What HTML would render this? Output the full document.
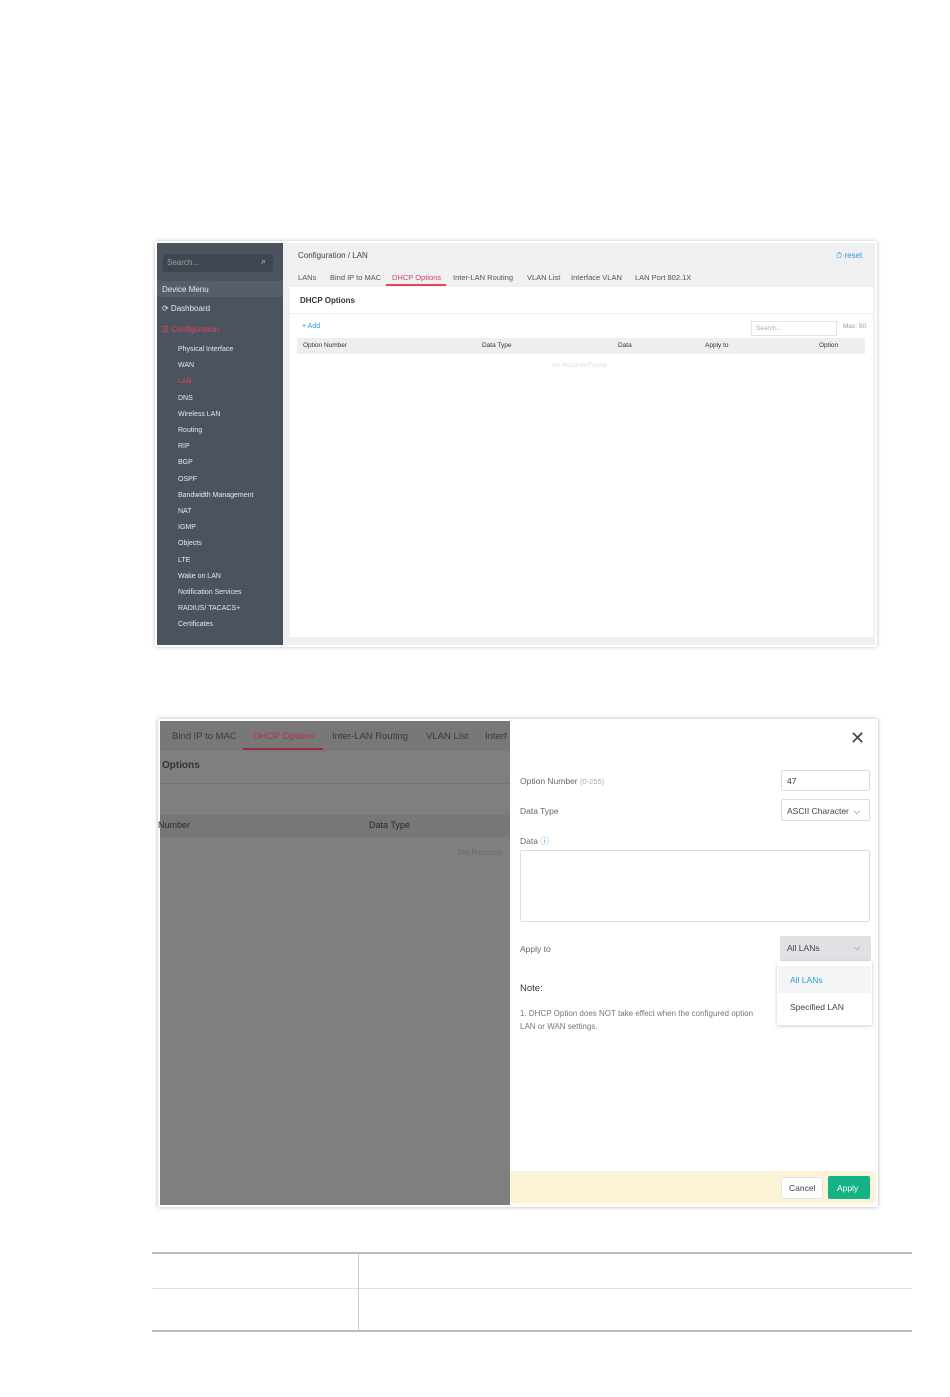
<!DOCTYPE html>
<html><head><meta charset="utf-8"><style>
*{box-sizing:border-box;margin:0;padding:0}
body{width:950px;height:1397px;background:#fff;position:relative;font-family:"Liberation Sans",sans-serif;overflow:hidden}
.a{position:absolute}
.t{position:absolute;white-space:nowrap}
.tb{position:absolute;top:273px;font-size:7.5px;color:#555;white-space:nowrap}
</style></head><body>

<!-- Screenshot 1 -->
<div class="a" style="left:155px;top:241px;width:722px;height:406px;box-shadow:0 0 4px rgba(0,0,0,.25)"></div>
<div class="a" style="left:157px;top:243px;width:126px;height:402px;background:#4b535e"></div>
<div class="a" style="left:163px;top:254px;width:110px;height:18px;background:#3f464f;border-radius:2px"></div>
<div class="t" style="left:167px;top:258px;font-size:8px;color:#9aa0a8">Search...</div>
<div class="t" style="left:261px;top:256px;font-size:9px;color:#cfd3d8">⌕</div>
<div class="a" style="left:157px;top:281px;width:126px;height:16px;background:#555e6a"></div>
<div class="t" style="left:162px;top:285px;font-size:8px;color:#e8eaec">Device Menu</div>
<div class="t" style="left:162px;top:304px;font-size:8px;color:#e8eaec">⟳ Dashboard</div>
<div class="t" style="left:162px;top:325px;font-size:8px;color:#e0455e">☰ Configuration</div>
<div class="a" style="left:178px;top:342px;font-size:7px;color:#e8eaec;line-height:16.2px">
Physical Interface<br>WAN<br><span style="color:#e0455e">LAN</span><br>DNS<br>Wireless LAN<br>Routing<br>RIP<br>BGP<br>OSPF<br>Bandwidth Management<br>NAT<br>IGMP<br>Objects<br>LTE<br>Wake on LAN<br>Notification Services<br>RADIUS/ TACACS+<br>Certificates</div>

<div class="a" style="left:283px;top:243px;width:592px;height:402px;background:#eef0f2"></div>
<div class="t" style="left:298px;top:251px;font-size:8px;color:#444">Configuration / LAN</div>
<div class="t" style="left:836px;top:251px;font-size:8px;color:#2a9fd6">⏱ reset</div>
<div class="tb" style="left:298px">LANs</div>
<div class="tb" style="left:330px">Bind IP to MAC</div>
<div class="tb" style="left:392px;color:#e0455e">DHCP Options</div>
<div class="tb" style="left:453px">Inter-LAN Routing</div>
<div class="tb" style="left:527px">VLAN List</div>
<div class="tb" style="left:571px">Interface VLAN</div>
<div class="tb" style="left:635px">LAN Port 802.1X</div>
<div class="a" style="left:386px;top:284px;width:60px;height:2px;background:#e0455e"></div>
<div class="a" style="left:290px;top:287px;width:583px;height:350px;background:#fff"></div>
<div class="t" style="left:300px;top:296px;font-size:8px;font-weight:bold;color:#333">DHCP Options</div>
<div class="a" style="left:290px;top:313px;width:583px;height:1px;background:#eee"></div>
<div class="t" style="left:302px;top:323px;font-size:7px;color:#2a9fd6">+ Add</div>
<div class="a" style="left:751px;top:321px;width:86px;height:15px;border:1px solid #e3e3e3"></div>
<div class="t" style="left:756px;top:325px;font-size:6.5px;color:#aaa">Search...</div>
<div class="t" style="left:843px;top:323px;font-size:6.5px;color:#999">Max: 50</div>
<div class="a" style="left:297px;top:338px;width:568px;height:16px;background:#eceef0"></div>
<div class="t" style="left:303px;top:342px;font-size:6.5px;color:#333">Option Number</div>
<div class="t" style="left:482px;top:342px;font-size:6.5px;color:#333">Data Type</div>
<div class="t" style="left:618px;top:342px;font-size:6.5px;color:#333">Data</div>
<div class="t" style="left:705px;top:342px;font-size:6.5px;color:#333">Apply to</div>
<div class="t" style="left:819px;top:342px;font-size:6.5px;color:#333">Option</div>
<div class="t" style="left:552px;top:362px;font-size:6.5px;color:#ddd">No Records Found</div>

<!-- Screenshot 2 -->
<div class="a" style="left:158px;top:719px;width:720px;height:488px;box-shadow:0 0 4px rgba(0,0,0,.3)"></div>
<div class="a" style="left:160px;top:721px;width:350px;height:484px;background:#7f7f7f"></div>
<div class="a" style="left:160px;top:721px;width:350px;height:30px;background:#787878"></div>
<div class="t" style="left:172px;top:731px;font-size:9.5px;color:#3a3a3a">Bind IP to MAC</div>
<div class="t" style="left:253px;top:731px;font-size:9.5px;color:#b0324a">DHCP Options</div>
<div class="a" style="left:243px;top:748px;width:80px;height:2px;background:#9a2a40"></div>
<div class="t" style="left:332px;top:731px;font-size:9.5px;color:#3a3a3a">Inter-LAN Routing</div>
<div class="t" style="left:426px;top:731px;font-size:9.5px;color:#3a3a3a">VLAN List</div>
<div class="t" style="left:485px;top:731px;font-size:9.5px;color:#3a3a3a">Interf</div>
<div class="t" style="left:162px;top:760px;font-size:10px;font-weight:bold;color:#333">Options</div>
<div class="a" style="left:160px;top:783px;width:350px;height:1px;background:#747474"></div>
<div class="a" style="left:160px;top:815px;width:350px;height:22px;background:#777"></div>
<div class="t" style="left:158px;top:820px;font-size:9px;color:#2a2a2a">Number</div>
<div class="t" style="left:369px;top:820px;font-size:9px;color:#2a2a2a">Data Type</div>
<div class="t" style="left:458px;top:847px;font-size:8.5px;color:#6a6a6a">No Records</div>

<div class="a" style="left:510px;top:721px;width:366px;height:483px;background:#fff;border-radius:0 4px 6px 6px;overflow:hidden">
  <div class="a" style="left:0;top:450px;width:366px;height:33px;background:#fdf4d8"></div>
</div>
<div class="t" style="left:850px;top:728px;font-size:18px;color:#444;font-weight:300">✕</div>
<div class="t" style="left:520px;top:776px;font-size:8.5px;color:#666">Option Number <span style="color:#aaa;font-size:7.5px">(0-255)</span></div>
<div class="a" style="left:781px;top:770px;width:89px;height:21px;border:1px solid #ddd;border-radius:2px"></div>
<div class="t" style="left:787px;top:776px;font-size:8.5px;color:#333">47</div>
<div class="t" style="left:520px;top:806px;font-size:8.5px;color:#666">Data Type</div>
<div class="a" style="left:781px;top:799px;width:89px;height:22px;border:1px solid #ddd;border-radius:2px"></div>
<div class="t" style="left:787px;top:806px;font-size:8.5px;color:#444">ASCII Character &nbsp;⌵</div>
<div class="t" style="left:520px;top:835px;font-size:8.5px;color:#666">Data <span style="color:#2a9fd6">ⓘ</span></div>
<div class="a" style="left:520px;top:850px;width:350px;height:72px;border:1px solid #ddd;border-radius:2px"></div>
<div class="t" style="left:520px;top:944px;font-size:8.5px;color:#666">Apply to</div>
<div class="a" style="left:780px;top:936px;width:91px;height:25px;background:#dfe1e5;border-radius:2px"></div>
<div class="t" style="left:787px;top:943px;font-size:8.5px;color:#444">All LANs</div>
<div class="t" style="left:854px;top:942px;font-size:8.5px;color:#666">⌵</div>
<div class="t" style="left:520px;top:983px;font-size:9.5px;color:#333">Note:</div>
<div class="t" style="left:520px;top:1007px;font-size:8px;color:#777;line-height:13px">1. DHCP Option does NOT take effect when the configured option<br>LAN or WAN settings.</div>
<div class="a" style="left:777px;top:961px;width:95px;height:64px;background:#fff;box-shadow:0 1px 4px rgba(0,0,0,.2)"></div>
<div class="a" style="left:778px;top:966px;width:93px;height:27px;background:#f4f5f7"></div>
<div class="t" style="left:790px;top:975px;font-size:8.5px;color:#2a9fd6">All LANs</div>
<div class="t" style="left:790px;top:1002px;font-size:8.5px;color:#444">Specified LAN</div>
<div class="a" style="left:781px;top:1177px;width:42px;height:22px;background:#fff;border:1px solid #e3e3e3;border-radius:2px"></div>
<div class="t" style="left:789px;top:1183px;font-size:8.5px;color:#444">Cancel</div>
<div class="a" style="left:828px;top:1176px;width:42px;height:23px;background:#16b287;border-radius:2px"></div>
<div class="t" style="left:837px;top:1183px;font-size:8.5px;color:#fff">Apply</div>

<!-- Table -->
<div class="a" style="left:152px;top:1252px;width:760px;height:2px;background:#bdbdbd"></div>
<div class="a" style="left:152px;top:1288px;width:760px;height:1px;background:#ddd"></div>
<div class="a" style="left:152px;top:1330px;width:760px;height:2px;background:#bdbdbd"></div>
<div class="a" style="left:358px;top:1254px;width:1px;height:76px;background:#ccc"></div>
</body></html>
